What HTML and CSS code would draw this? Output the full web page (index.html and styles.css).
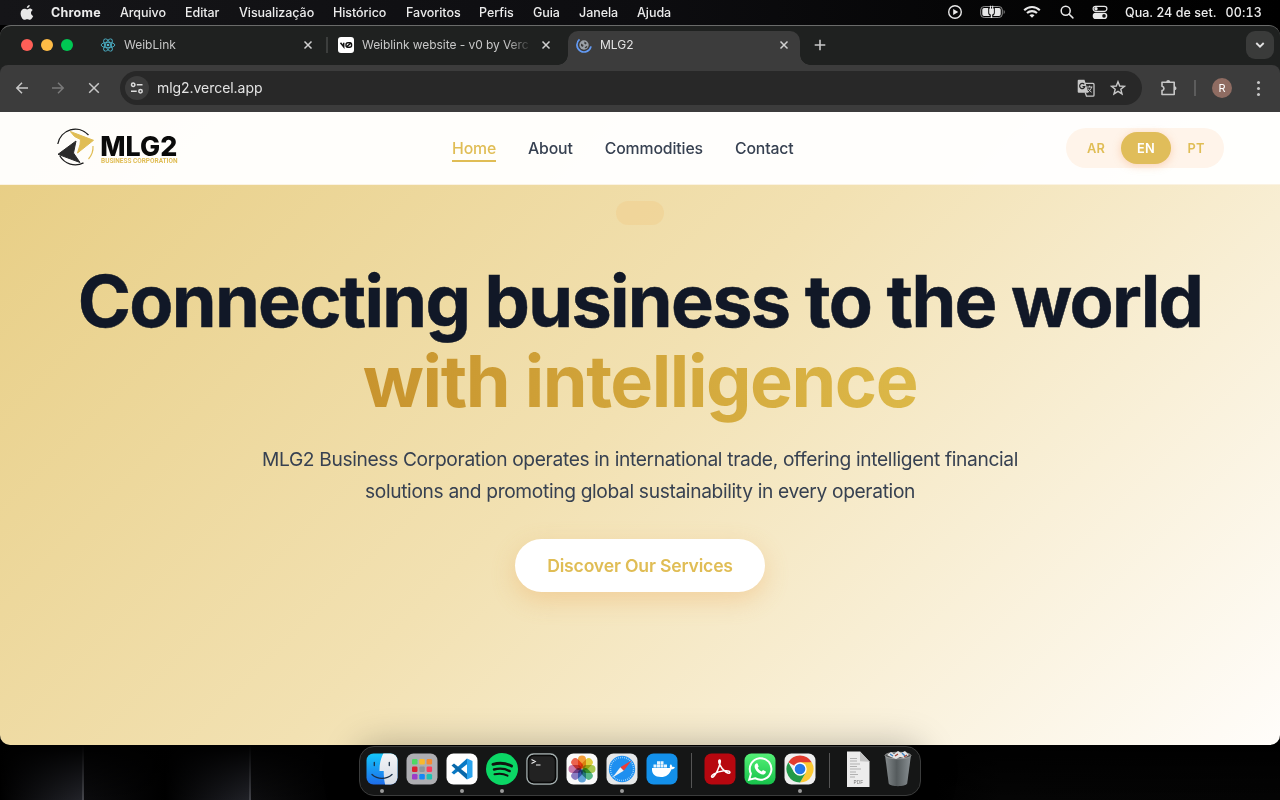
FILE: index.html
```html
<!DOCTYPE html>
<html lang="pt">
<head>
<meta charset="utf-8">
<title>MLG2</title>
<link rel="stylesheet" href="styles.css">
</head>
<body>
<header class="menubar">
  <svg class="apple" width="14" height="17" viewBox="0 0 14 17" fill="#e8e8e8"><path d="M9.700 1c.1 1.700-1.400 3.200-2.900 3.100C6.700 2.500 8.100 1.100 9.700 1zM9.800 4.600c1.100 0 2.200.6 2.900 1.500-2.500 1.500-2.100 4.900.5 5.900-.6 1.600-2 3.800-3.400 3.800-1 0-1.400-.6-2.600-.6s-1.600.6-2.600.6C2.600 15.800.6 12.300.6 9.400c0-3 1.900-4.700 3.800-4.700 1.200 0 2 .7 2.800.7s1.500-.8 2.600-.8z"/></svg>
  <nav class="menus">
    <b class="m1">Chrome</b><span class="m2">Arquivo</span><span class="m3">Editar</span><span class="m4">Visualização</span><span class="m5">Histórico</span><span class="m6">Favoritos</span><span class="m7">Perfis</span><span class="m8">Guia</span><span class="m9">Janela</span><span>Ajuda</span>
  </nav>
  <div class="status">
    <svg width="16" height="16" viewBox="0 0 16 16"><circle cx="8" cy="8" r="6.300" fill="none" stroke="#e8e8e8" stroke-width="1.400"/><path d="M6.200 5v6l5-3z" fill="#e8e8e8"/></svg>
    <svg class="battery" width="26" height="14" viewBox="0 0 26 14"><rect x=".7" y="1.500" width="21.600" height="11" rx="3.500" fill="none" stroke="#8a8a8a"/><path d="M23.700 5v4c1.400-.5 1.400-3.500 0-4z" fill="#8a8a8a"/><path d="M4 3h4.200v4.500c0 1.700.8 2.600 1.500 3V11H4a1.700 1.700 0 0 1-1.700-1.700V4.700A1.700 1.700 0 0 1 4 3zM14.800 3H19a1.700 1.700 0 0 1 1.700 1.700v4.600A1.700 1.700 0 0 1 19 11h-5.700v-.5c.8-.5 1.500-1.300 1.500-3zM9.200 3.500h.7V.7h1.100v2.800h1.100V.7h1.100v2.800h.7v4c0 1.200-.8 1.900-1.700 2.100V13h-1.400V9.600c-.9-.2-1.600-.9-1.600-2.100z" fill="#e8e8e8"/></svg>
    <svg class="wifi" width="18" height="14" viewBox="0 0 18 14" fill="none" stroke="#e8e8e8" stroke-width="2.100"><path d="M1.200 5.200c4.400-4.300 11.200-4.300 15.600 0M4 8.100c2.900-2.700 7.100-2.700 10 0"/><path d="M9 12.800 6.500 10.300c1.500-1.300 3.500-1.300 5 0z" fill="#e8e8e8" stroke="none"/></svg>
    <svg class="search" width="14" height="14" viewBox="0 0 14 14" fill="none" stroke="#e8e8e8" stroke-width="1.500" stroke-linecap="round"><circle cx="5.700" cy="5.700" r="4.500"/><path d="m9.200 9.200 3.700 3.700"/></svg>
    <svg class="control" width="16" height="15" viewBox="0 0 16 15"><rect x="1.100" y="1.300" width="13.800" height="5" rx="2.500" fill="none" stroke="#e8e8e8" stroke-width="1.200"/><circle cx="4" cy="3.800" r="1.700" fill="#e8e8e8"/><rect x=".7" y="7.800" width="14.600" height="6.200" rx="3.100" fill="#e8e8e8"/><circle cx="12" cy="10.900" r="1.800" fill="#111"/></svg>
    <time class="clock"><span>Qua. 24 de set.</span><span class="hour">00:13</span></time>
  </div>
</header>

<main class="window">
  <div class="tabstrip">
    <div class="lights"><i class="red"></i><i class="yellow"></i><i class="green"></i></div>
    <div class="tab first">
      <svg class="favicon" width="16" height="16" viewBox="-8 -8 16 16" fill="none" stroke="#4db5cc" stroke-width=".9"><ellipse rx="6.800" ry="2.700"/><ellipse rx="6.800" ry="2.700" transform="rotate(60)"/><ellipse rx="6.800" ry="2.700" transform="rotate(120)"/><circle r="1.300" fill="#4db5cc" stroke="none"/></svg>
      <span class="title t1">WeibLink</span>
      <svg class="close" width="10" height="10" viewBox="0 0 10 10"><path d="m1.500 1.500 7 7m0-7-7 7"/></svg>
    </div>
    <i class="tab-divider"></i>
    <div class="tab second">
      <svg class="favicon" width="16" height="16" viewBox="0 0 16 16"><rect width="16" height="16" rx="3" fill="#fff"/><path d="M2.500 5.800 5.700 9.800V5.800M8.500 10l4.700-4.200" fill="none" stroke="#111" stroke-width="1.500"/><rect x="8" y="5.700" width="5.600" height="4.600" rx="2" fill="none" stroke="#111" stroke-width="1.400"/></svg>
      <span class="title t2">Weiblink website - v0 by Verc</span>
      <svg class="close" width="10" height="10" viewBox="0 0 10 10"><path d="m1.500 1.500 7 7m0-7-7 7"/></svg>
    </div>
    <div class="tab active">
      <svg class="favicon" width="16" height="16" viewBox="0 0 16 16"><circle cx="8" cy="8" r="4.700" fill="#9aa0a6"/><path d="M5 6.500 7.500 8l-.5 2-2-1zM8.500 4.500l2.200 1.500-1 1.500-1.500-1zM8.500 10.500l2-1.500 1 .5-1.500 2z" fill="#3c3c3c"/><path d="M3.500 2.400A7.100 7.100 0 1 0 15 9.300" fill="none" stroke="#639af3" stroke-width="1.700"/></svg>
      <span class="title">MLG2</span>
      <svg class="close" width="10" height="10" viewBox="0 0 10 10"><path d="m1.500 1.500 7 7m0-7-7 7"/></svg>
    </div>
    <svg class="plus" width="12" height="12" viewBox="0 0 12 12"><path d="M6 .7v10.600M.7 6h10.600" stroke="#c7c7c7" stroke-width="1.600"/></svg>
    <div class="tab-search"><svg width="10" height="8" viewBox="0 0 10 8"><path d="m1.300 2 3.700 3.700L8.700 2" fill="none" stroke="#e3e3e3" stroke-width="1.800"/></svg></div>
  </div>
  <div class="toolbar">
    <svg class="nav-icon" width="16" height="16" viewBox="0 0 16 16"><path d="M14 8H3m5-5.200L2.800 8 8 13.200"/></svg>
    <svg class="nav-icon dim" width="16" height="16" viewBox="0 0 16 16"><path d="M2 8h11M8 2.800 13.200 8 8 13.200"/></svg>
    <svg class="nav-icon" width="16" height="16" viewBox="0 0 16 16"><path d="m3.200 3.200 9.600 9.600m0-9.600-9.600 9.600"/></svg>
    <div class="omnibox">
      <div class="site"><svg width="14" height="12" viewBox="0 0 14 12" fill="none" stroke="#dedede" stroke-width="1.500"><circle cx="3.200" cy="2.700" r="1.700"/><path d="M6.800 2.700h5.700M1 9.300h5.700"/><circle cx="10.500" cy="9.300" r="1.700"/></svg></div>
      <span class="url">mlg2.vercel.app</span>
      <svg class="translate" width="18" height="18" viewBox="0 0 18 18"><path d="M8 4.400h8a1 1 0 0 1 1 1v10.800a1 1 0 0 1-1 1H9.500L8.200 13.500" fill="none" stroke="#c7c7c7" stroke-width="1.300"/><path d="M1.700.7h5.800l4 13H1.700a1 1 0 0 1-1-1v-11a1 1 0 0 1 1-1z" fill="#c7c7c7"/><path d="M7.300 5.400a2.600 2.600 0 1 0 .5 2.200H5.500" fill="none" stroke="#282828" stroke-width="1.200"/><path d="M10 8h5.400M12.600 6.700V8m2 0c-.5 2.200-1.900 3.900-3.500 4.800m0-3.300c.7 1.600 2 2.800 3.500 3.700" fill="none" stroke="#c7c7c7"/></svg>
      <svg class="star" width="16" height="16" viewBox="0 0 16 16"><path d="m8 1.700 1.700 4.300 4.700.3-3.600 3 1.200 4.600L8 11.400l-4 2.500 1.200-4.600-3.600-3 4.700-.3z" fill="none" stroke="#c7c7c7" stroke-width="1.400"/></svg>
    </div>
    <svg class="puzzle" width="18" height="18" viewBox="0 0 18 18"><path d="M2 3.200h12.200v12.300H2v-4c2.600-.4 2.600-3.800 0-4.200z" fill="none" stroke="#c7c7c7" stroke-width="1.600" stroke-linejoin="round"/><path d="M6.200 3a2 2 0 0 1 4 0zM14.500 7.300a2 2 0 0 1 0 4z" fill="#c7c7c7"/></svg>
    <i class="tool-divider"></i>
    <div class="avatar">R</div>
    <div class="kebab"><i></i><i></i><i></i></div>
  </div>

  <div class="page">
    <div class="site-header">
      <svg class="logo" width="126" height="44" viewBox="0 0 126 44">
        <path d="M1.800 18A17.800 17.800 0 0 1 32.500 9M27.500 36.800A17.800 17.800 0 0 1 3.800 29.800" fill="none" stroke="#1d1d1d" stroke-width="1.300"/>
        <path d="M37 20a17.800 17.800 0 0 1-4.500 13" fill="none" stroke="#e0bd55" stroke-width="1.200"/>
        <path d="M14.300 5.500 37.500 14.300 21.500 27 24 18.500 24.500 13.500 18.500 10.500z" fill="#e0bd55" stroke="#e0bd55" stroke-linejoin="round"/>
        <path d="M20 15 2 28.300 24 36.500 17.500 27z" fill="#2b2b2b" stroke="#2b2b2b" stroke-linejoin="round"/>
        <text x="44.300" y="30" textLength="77" lengthAdjust="spacingAndGlyphs" class="logo-name">MLG2</text>
        <text x="45" y="37.300" textLength="76.500" lengthAdjust="spacingAndGlyphs" class="logo-sub">BUSINESS CORPORATION</text>
      </svg>
      <nav class="links"><a class="current">Home</a><a class="l2">About</a><a class="l3">Commodities</a><a class="l4">Contact</a></nav>
      <div class="langs"><span>AR</span><span class="on">EN</span><span>PT</span></div>
    </div>
    <section class="hero">
      <div class="pill"></div>
      <h1>Connecting business to the world<br><span class="gold">with intelligence</span></h1>
      <p>MLG2 Business Corporation operates in international trade, offering intelligent financial<br>solutions and promoting global sustainability in every operation</p>
      <a class="cta"><span>Discover Our Services</span></a>
    </section>
  </div>
</main>

<footer class="desktop">
  <div class="dock">
    <div class="app run"><svg width="32" height="32" viewBox="0 0 32 32"><defs><linearGradient id="fa" x2="0" y2="1"><stop stop-color="#14c8fa"/><stop offset="1" stop-color="#1e6bea"/></linearGradient><linearGradient id="fb" x2="0" y2="1"><stop stop-color="#f5f5f7"/><stop offset="1" stop-color="#d5dce5"/></linearGradient><clipPath id="sq"><rect x=".5" y=".5" width="31" height="31" rx="7"/></clipPath></defs><g clip-path="url(#sq)"><path d="M0 0h32v32H0z" fill="url(#fa)"/><path d="M17.500 0C14.500 6 13.300 12 13.500 18h4.200c0 5 .4 9.500 1.500 14H32V0z" fill="url(#fb)"/></g><path d="M8.300 9.500v3M23.300 9.500v3M6 21.500c5.500 5.200 14.500 5.200 20 0" fill="none" stroke="#193047" stroke-width="1.300" stroke-linecap="round"/></svg></div>
    <div class="app"><svg width="32" height="32" viewBox="0 0 32 32"><rect x=".5" y=".5" width="31" height="31" rx="7" fill="#aeaeb2"/><g><rect x="6" y="6" width="5.500" height="5.500" rx="1.300" fill="#4cd964"/><rect x="13.300" y="6" width="5.500" height="5.500" rx="1.300" fill="#f9b92c"/><rect x="20.600" y="6" width="5.500" height="5.500" rx="1.300" fill="#f58b32"/><rect x="6" y="13.500" width="5.500" height="5.500" rx="1.300" fill="#dc2030"/><rect x="13.300" y="13.500" width="5.500" height="5.500" rx="1.300" fill="#8d959b"/><rect x="20.600" y="13.500" width="5.500" height="5.500" rx="1.300" fill="#fc3c5c"/><rect x="6" y="21" width="5.500" height="5.500" rx="1.300" fill="#9c3cc8"/><rect x="13.300" y="21" width="5.500" height="5.500" rx="1.300" fill="#1687f5"/><rect x="20.600" y="21" width="5.500" height="5.500" rx="1.300" fill="#1fc2b2"/></g></svg></div>
    <div class="app run"><svg width="32" height="32" viewBox="0 0 32 32"><rect x=".5" y=".5" width="31" height="31" rx="7" fill="#fff"/><path d="M21 5.500 26.500 8v16L21 26.500z" fill="#29a3ee"/><path d="M21 5.500v5.800L8 21.500l-2.500-2z" fill="#0879c5"/><path d="M21 26.500v-5.800L8 10.500l-2.500 2z" fill="#0868aa"/></svg></div>
    <div class="app run"><svg width="32" height="32" viewBox="0 0 32 32"><circle cx="16" cy="16" r="16" fill="#0bd765"/><g fill="none" stroke="#101510" stroke-linecap="round"><path d="M7 11.300c6.500-1.800 13-1.200 18.500 1.700" stroke-width="2.900"/><path d="M8 16.500c5.500-1.500 11-1 15.700 1.600" stroke-width="2.400"/><path d="M8.500 21.300c4.700-1.200 9-.8 13 1.400" stroke-width="2"/></g></svg></div>
    <div class="app"><svg width="32" height="32" viewBox="0 0 32 32"><rect x="1" y="1" width="30" height="30" rx="6.500" fill="#222" stroke="#a5b0b0" stroke-width="1.400"/><rect x="2.500" y="2.500" width="27" height="27" rx="5.500" fill="none" stroke="#080808" stroke-width="1.500"/><path d="m5.500 6.500 3.700 2-3.700 2M10 12h4.500" fill="none" stroke="#eee" stroke-width="1.200"/></svg></div>
    <div class="app"><svg width="32" height="32" viewBox="-16 -16 32 32"><rect x="-15.500" y="-15.500" width="31" height="31" rx="7" fill="#fafafa"/><g class="petals"><rect x="-4" y="-13.500" width="8" height="13" rx="4" fill="#f9a13a"/><rect x="-4" y="-13.500" width="8" height="13" rx="4" fill="#e4d03d" transform="rotate(45)"/><rect x="-4" y="-13.500" width="8" height="13" rx="4" fill="#aacb50" transform="rotate(90)"/><rect x="-4" y="-13.500" width="8" height="13" rx="4" fill="#55b98a" transform="rotate(135)"/><rect x="-4" y="-13.500" width="8" height="13" rx="4" fill="#62a6dc" transform="rotate(180)"/><rect x="-4" y="-13.500" width="8" height="13" rx="4" fill="#8d80c6" transform="rotate(225)"/><rect x="-4" y="-13.500" width="8" height="13" rx="4" fill="#cb7bad" transform="rotate(270)"/><rect x="-4" y="-13.500" width="8" height="13" rx="4" fill="#f0664e" transform="rotate(315)"/></g></svg></div>
    <div class="app run"><svg width="32" height="32" viewBox="0 0 32 32"><rect x=".5" y=".5" width="31" height="31" rx="7" fill="#e6e8e9"/><circle cx="16" cy="16" r="13.200" fill="#1e8ff0"/><circle cx="16" cy="16" r="11.500" fill="none" stroke="#b5e1ff" stroke-width="1.500" stroke-dasharray=".7 1.300"/><path d="M25.500 7.500 17.700 17.700 14.300 14.300z" fill="#ed3c38"/><path d="M6.500 24.500 14.300 14.300 17.700 17.700z" fill="#f1f3f5"/></svg></div>
    <div class="app"><svg width="32" height="32" viewBox="0 0 32 32"><rect x=".5" y=".5" width="31" height="31" rx="7" fill="#1390ea"/><path d="M6 15h18c-.5-1.500-.2-2.700.8-3.800 1 .8 1.300 1.600 1.300 2.600 1-.3 2-.2 2.800.4-.6 1.400-1.700 2-3.400 2-1.900 5-5.300 7.800-10.500 7.800C9 24 5.500 21 6 15z" fill="#fff"/><path d="M7.500 11.500h3v3h-3zM11 11.500h3v3h-3zM14.500 11.500h3v3h-3zM18 11.500h3v3h-3zM11 8.200h3v3h-3zM14.500 8.200h3v3h-3z" fill="#fff" opacity=".9"/></svg></div>
    <i class="dock-divider"></i>
    <div class="app"><svg width="32" height="32" viewBox="0 0 32 32"><rect x=".5" y=".5" width="31" height="31" rx="7" fill="#b7070f"/><path d="M15.700 7c-2.600 0 .7 8.500 6.100 12 3 1.900 4.300 1.300 4.100.1-.4-2.500-10-1.600-16.300 2-3.400 2-1.900 4.300.1 2.300C13.200 20 18 7 15.700 7z" fill="none" stroke="#fff" stroke-width="1.500"/></svg></div>
    <div class="app"><svg width="32" height="32" viewBox="0 0 32 32"><defs><linearGradient id="wa" x2="0" y2="1"><stop stop-color="#54f177"/><stop offset="1" stop-color="#16c14a"/></linearGradient></defs><rect x=".5" y=".5" width="31" height="31" rx="7" fill="url(#wa)"/><path d="m5.200 26.700 1.700-6A10.800 10.800 0 1 1 11 25.200z" fill="none" stroke="#fff" stroke-width="2"/><path d="m11 11.500 1.500-1.300 1 .3 1.200 3-1 1.300c1 1.800 2.200 3 4 3.700l1.300-1.500 2.900 1.500c.1 2-1.700 3.100-3.300 3-4-.2-9.500-5.800-7.600-10z" fill="#fff"/></svg></div>
    <div class="app run"><svg width="32" height="32" viewBox="0 0 32 32"><rect x=".5" y=".5" width="31" height="31" rx="7" fill="#f0f0f0"/><path d="M16 16 4.300 9.250A13.500 13.500 0 0 1 27.700 9.250z" fill="#e23b2e"/><path d="M16 9.250h11.700A13.500 13.500 0 0 1 16 29.500l5.850-10.100z" fill="#fcc934"/><path d="M10.150 19.400 4.300 9.250A13.500 13.500 0 0 0 16 29.500l5.850-10.100z" fill="#229a49"/><circle cx="16" cy="16" r="6.700" fill="#fff"/><circle cx="16" cy="16" r="5.300" fill="#2577e8"/></svg></div>
    <i class="dock-divider"></i>
    <div class="app"><svg class="tall" width="32" height="38" viewBox="0 0 32 38"><path d="M5 1.500h13l9.500 10V37H5z" fill="#ececec"/><path d="M18 1.500v9.800l9.500.4z" fill="#c3c3c3"/><path d="M8 8.500h7M8 11h7M8 14h10M8 16.500h7M8 19h11M8 22h6M8 24.500h8M8 27h5" stroke="#aaa" stroke-width=".9"/><text x="11.500" y="33.500" class="pdf">PDF</text></svg></div>
    <div class="app"><svg class="tall" width="32" height="38" viewBox="0 0 32 38"><defs><linearGradient id="tr"><stop stop-color="#858b8d"/><stop offset=".45" stop-color="#555b5d"/><stop offset="1" stop-color="#899093"/></linearGradient></defs><path d="M3 5h26l-3.800 28.500c-1.500 3.500-17 3.500-18.500 0z" fill="url(#tr)"/><ellipse cx="16" cy="5.500" rx="13" ry="3.300" fill="#4b4f50" stroke="#aaa" stroke-width=".8"/><path d="m5 5 4-3 3 2 4-3 3 2 4-2 4 4-5 3-4-1-4 2-5-2z" fill="#e4e4e4"/><path d="m8 4 3 2M20 3l3 3" stroke="#3c82c2" stroke-width="1.400"/><path d="m13 6 3-2M22 7l3-2" stroke="#a04030" stroke-width="1.300"/></svg></div>
  </div>
</footer>
</body>
</html>
```

FILE: styles.css
```css
* { box-sizing: border-box; }
body { margin: 0; width: 1280px; height: 800px; overflow: hidden; display: flex; flex-direction: column; background: #000; font-family: Inter, "Liberation Sans", sans-serif; }
svg { display: block; flex: none; }
i { display: block; flex: none; }

.menubar { height: 25px; display: flex; align-items: center; padding: 0 18px 1px 20px; background: linear-gradient(90deg, #151518, #0d0d10 50%, #030303 85%, #000); color: #ececec; font-size: 12.5px; font-weight: 500; white-space: nowrap; }
.menus { display: flex; margin-left: 17px; letter-spacing: -.05px; }
.menus b { font-weight: 700; letter-spacing: .25px; }
.m1 { width: 69px; } .m2 { width: 65px; } .m3 { width: 54px; } .m4 { width: 94px; } .m5 { width: 73px; }
.m6 { width: 73px; } .m7 { width: 54px; } .m8 { width: 46px; } .m9 { width: 58px; }
.status { margin-left: auto; display: flex; align-items: center; }
.battery { margin-left: 17px; }
.wifi { margin-left: 17px; }
.search { margin-left: 19px; }
.control { margin-left: 18px; }
.clock { margin-left: 17px; width: 137px; display: flex; justify-content: space-between; letter-spacing: .05px; }
.hour { font-variant-numeric: tabular-nums; letter-spacing: .15px; }

.window { height: 720px; display: flex; flex-direction: column; border-radius: 11px 11px 10px 10px; overflow: hidden; background: #1f2120; border-top: 1px solid #6a6b6a; }
.tabstrip { height: 39px; display: flex; align-items: flex-end; padding: 0 6px 0 21px; color: #c7c7c7; font-size: 12px; }
.lights { display: flex; gap: 8px; width: 80px; padding-bottom: 14px; }
.lights i { width: 12px; height: 12px; border-radius: 50%; }
.red { background: #ff5f57; } .yellow { background: #febc46; } .green { background: #00c853; }
.tab { height: 34px; display: flex; align-items: center; padding-bottom: 7px; white-space: nowrap; }
.first { width: 225px; }
.second { width: 240px; padding-left: 10px; }
.active { position: relative; width: 232px; padding-left: 8px; background: #3c3c3c; border-radius: 10px 10px 0 0; color: #e3e3e3; }
.active::before, .active::after { content: ""; position: absolute; bottom: 0; width: 10px; height: 10px; }
.active::before { right: 100%; background: radial-gradient(circle at 0 0, transparent 9.5px, #3c3c3c 10px); }
.active::after { left: 100%; background: radial-gradient(circle at 100% 0, transparent 9.5px, #3c3c3c 10px); }
.favicon { margin-right: 8px; }
.first .favicon { margin-left: -1px; }
.title { flex: 1; }
.t2 { flex: 0 0 167px; letter-spacing: -.06px; -webkit-mask-image: linear-gradient(90deg, #000 145px, transparent 170px); mask-image: linear-gradient(90deg, #000 145px, transparent 170px); }
.close { stroke: #d0d0d0; stroke-width: 1.5; margin-right: 11px; }
.t1 + .close { margin-right: 13px; }
.t2 + .close { margin-left: 12px; }
.tab-divider { width: 2px; height: 16px; margin-bottom: 12px; background: #3c3e3d; }
.plus { margin: 0 0 14px 14px; }
.tab-search { width: 28px; height: 28px; margin: 0 0 6px auto; border-radius: 9px; background: #3a3b3a; display: grid; place-items: center; }

.toolbar { height: 47px; flex: none; display: flex; align-items: center; padding: 0 19px 1px 14px; background: #3c3c3c; border-radius: 8px 8px 0 0; }
.nav-icon { fill: none; stroke: #c7c7c7; stroke-width: 1.5; margin-right: 20px; }
.nav-icon.dim { stroke: #7a7a7a; }
.toolbar .nav-icon:nth-child(3) { margin-right: 18px; }
.omnibox { width: 1022px; height: 34px; border-radius: 17px; background: #282828; display: flex; align-items: center; padding: 0 16px 0 5px; color: #e3e3e3; font-size: 14px; }
.url { padding-bottom: 1px; letter-spacing: -.05px; }
.site { width: 24px; height: 24px; border-radius: 50%; background: #3c3c3c; display: grid; place-items: center; margin-right: 8px; }
.translate { margin-left: auto; margin-right: 15px; }
.puzzle { margin-left: 18px; }
.tool-divider { width: 2px; height: 16px; background: #5c5c5c; margin-left: 16px; }
.avatar { width: 20px; height: 20px; border-radius: 50%; background: #8f6c62; color: #fff; font-size: 11px; display: grid; place-items: center; margin-left: 16px; }
.kebab { width: 4px; display: grid; gap: 3px; margin-left: auto; }
.kebab i { width: 3px; height: 3px; border-radius: 50%; background: #c7c7c7; }

.page { height: 633px; flex: none; display: flex; flex-direction: column; background: linear-gradient(135deg, #e7cd82 0%, #f2e1b2 48%, #fffdfa 100%); }
.site-header { height: 73px; flex: none; display: flex; align-items: center; background: rgba(255, 255, 255, .96); border-bottom: 1px solid #fbf3e3; padding: 0 56px; }
.logo-name { font: 800 27px Inter, sans-serif; fill: #0a0a0a; }
.logo-sub { font: 700 6.5px "Roboto", sans-serif; fill: #e0bd55; }
.links { display: flex; margin: 2px 0 0 270px; color: #374151; font-size: 15.8px; font-weight: 500; white-space: nowrap; }
.links a { height: 26px; line-height: 26px; letter-spacing: -.13px; }
.links .current { width: 44px; color: #e0bd55; border-bottom: 2px solid #e0bd55; }
.l2, .l3, .l4 { margin-left: 32px; }
.langs { margin-left: auto; width: 158px; height: 40px; border-radius: 20px; background: #fff4ea; display: flex; padding: 4px 3px 4px 5px; color: #e0bd55; font-size: 12.8px; font-weight: 600; letter-spacing: .2px; }
.langs span { width: 50px; height: 32px; display: grid; place-items: center; border-radius: 16px; }
.langs .on { background: #e0bd5a; color: #fff; box-shadow: 0 2px 8px rgba(240, 150, 80, .35); }

.hero { flex: 1; display: flex; flex-direction: column; align-items: center; text-align: center; padding-top: 16px; }
.pill { width: 48px; height: 24px; border-radius: 12px; background: rgba(240, 208, 145, .6); }
h1 { margin: 36px 0 0; color: #111827; font-size: 72px; line-height: 80px; font-weight: 700; letter-spacing: -1.7px; white-space: nowrap; -webkit-text-stroke: .5px #111827; }
.gold { background: linear-gradient(90deg, #c8942e, #dcb848); -webkit-background-clip: text; background-clip: text; color: transparent; -webkit-text-stroke: 0; padding-bottom: 6px; letter-spacing: -1.45px; }
.hero p { margin: 22px 0 0; color: #374151; font-size: 19.2px; line-height: 32px; white-space: nowrap; letter-spacing: -.35px; }
.cta { margin-top: 32px; width: 250px; height: 53px; border-radius: 27px; background: #fff; color: #e0bd55; display: grid; place-items: center; font-size: 17.6px; font-weight: 600; letter-spacing: -.18px; box-shadow: 0 8px 24px rgba(235, 155, 70, .3); }

.desktop { position: relative; height: 55px; display: flex; justify-content: center; background: linear-gradient(#000, transparent), linear-gradient(90deg, #000 0, #222329 82px, #44454b 82px, #44454b 84px, #0b0b0d 84px, #000 165px, #202127 249px, #404147 249px, #404147 251px, #0d0d0f 251px, #000 335px, #000 920px, #050505 1000px, #040404); }
.dock { width: 562px; height: 50px; margin-top: 1px; border: 1px solid #3b3c3c; border-radius: 15px; background: #151616; display: flex; padding: 6px 0 0 2px; box-shadow: 0 0 36px rgba(0, 0, 0, .28); }
.app { width: 40px; flex: none; display: flex; flex-direction: column; align-items: center; }
.run::after { content: ""; width: 4px; height: 4px; margin-top: 4px; border-radius: 50%; background: #9b9b9b; }
.dock-divider { width: 1px; height: 35px; margin: 0 8px 0 9px; background: #555; }
.tall { margin-top: -3px; }
.petals rect { mix-blend-mode: multiply; }
.pdf { font: 5px Inter, sans-serif; fill: #777; }
```
